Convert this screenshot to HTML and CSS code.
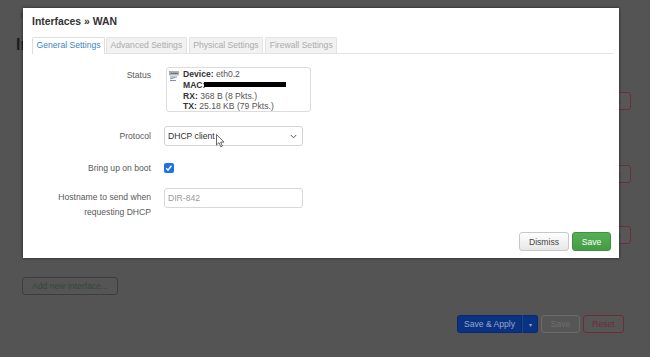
FILE: index.html
```html
<!DOCTYPE html>
<html>
<head>
<meta charset="utf-8">
<title>Interfaces » WAN</title>
<link rel="stylesheet" href="styles.css">
</head>
<body>
<div class="page">
  <div class="topnav"><span class="crumb">Interfaces</span></div>
  <h2 class="page-title">Interfaces</h2>
  <div class="iface-list">
    <div class="iface-row"><button class="btn-del">Delete</button></div>
    <div class="iface-row short"><button class="btn-del">Delete</button></div>
    <div class="iface-row last"><button class="btn-del">Delete</button></div>
  </div>
  <div class="add-wrap"><button class="btn-add">Add new interface...</button></div>
  <div class="actions">
    <div class="split">
      <button class="btn-apply">Save &amp; Apply</button>
      <button class="btn-apply-drop">▾</button>
    </div>
    <button class="btn-save-bg">Save</button>
    <button class="btn-reset">Reset</button>
  </div>
</div>

<div class="modal">
  <h4 class="modal-title">Interfaces » WAN</h4>
  <ul class="tabs">
    <li class="tab active">General Settings</li>
    <li class="tab">Advanced Settings</li>
    <li class="tab">Physical Settings</li>
    <li class="tab">Firewall Settings</li>
  </ul>
  <div class="form">
    <div class="row">
      <div class="label status-label">Status</div>
      <div class="status-box">
        <svg class="status-icon" width="10" height="10" viewBox="0 0 10 10">
          <rect x="0.5" y="0.5" width="9" height="3.5" fill="#c9c9c9" stroke="#8a8a8a" stroke-width="0.6"/>
          <rect x="1.5" y="1.6" width="1.2" height="1.3" fill="#333"/>
          <rect x="3.5" y="1.6" width="1.2" height="1.3" fill="#333"/>
          <rect x="5.5" y="1.6" width="1.2" height="1.3" fill="#333"/>
          <rect x="7.4" y="1.6" width="1.2" height="1.3" fill="#333"/>
          <path d="M1 6 H8 M1 8 L6 6.5 M1 9.5 H7" stroke="#6d7fc9" stroke-width="0.9" fill="none"/>
        </svg>
        <div class="status-lines">
          <div><b>Device:</b> eth0.2</div>
          <div><b>MAC:</b><span class="redact"></span></div>
          <div><b>RX:</b> 368 B (8 Pkts.)</div>
          <div><b>TX:</b> 25.18 KB (79 Pkts.)</div>
        </div>
      </div>
    </div>
    <div class="row proto-row">
      <div class="label line20">Protocol</div>
      <div class="select">
        <span>DHCP client</span>
        <svg width="7" height="5" viewBox="0 0 7 5"><path d="M0.8 1 L3.5 3.8 L6.2 1" stroke="#555" stroke-width="1" fill="none"/></svg>
      </div>
    </div>
    <div class="row boot-row">
      <div class="label line20">Bring up on boot</div>
      <div class="check-wrap">
        <span class="checkbox">
          <svg width="10" height="10" viewBox="0 0 10 10"><path d="M2.3 5.2 L4.2 7.2 L7.8 2.6" stroke="#fff" stroke-width="1.5" fill="none"/></svg>
        </span>
      </div>
    </div>
    <div class="row host-row">
      <div class="label host-label">Hostname to send when<br>requesting DHCP</div>
      <div class="input"><span class="placeholder">DIR-842</span></div>
    </div>
  </div>
  <div class="modal-foot">
    <button class="btn-dismiss">Dismiss</button>
    <button class="btn-save">Save</button>
  </div>
</div>

<svg class="cursor" width="9" height="14" viewBox="0 0 9 14">
  <path d="M0.5 0.5 L0.5 11 L3 8.6 L4.8 12.8 L6.4 12.1 L4.7 8.1 L8 8.1 Z" fill="#fff" stroke="#444" stroke-width="0.8"/>
</svg>
</body>
</html>
```

FILE: styles.css
```css
* { box-sizing: border-box; }

body {
  margin: 0;
  width: 650px;
  height: 357px;
  overflow: hidden;
  position: relative;
  background: #545454;
  font-family: "Liberation Sans", Arial, sans-serif;
  font-size: 8.6px;
}

button {
  font-family: inherit;
  font-size: 8.6px;
  margin: 0;
  padding: 0;
  white-space: nowrap;
}

/* ---------- dimmed page behind the modal ---------- */
.page {
  padding: 0 19px 0 16px;
}

.topnav {
  height: 35px;
  padding: 10px 0 0 4px;
}

.crumb {
  color: #22416c;
  font-size: 8px;
  line-height: 10px;
}

.page-title {
  margin: 0;
  font-size: 16px;
  line-height: 20px;
  color: #1c1c1c;
  font-weight: bold;
}

.iface-list {
  display: flex;
  flex-direction: column;
  padding-top: 37px;
}

.iface-row {
  height: 73px;
  display: flex;
  justify-content: flex-end;
  align-items: flex-start;
}

.iface-row.short { height: 61px; }
.iface-row.last { height: 51px; }

.btn-del {
  width: 46px;
  height: 18px;
  background: #575757;
  border: 1px solid #6c2f38;
  border-radius: 3px;
  color: #6c2f38;
}

.add-wrap {
  padding-left: 6px;
}

.btn-add {
  height: 18px;
  width: 96px;
  background: #555;
  border: 1px solid #3d3d3d;
  border-radius: 3px;
  color: #34483a;
}

.actions {
  margin-top: 20px;
  margin-right: 7px;
  display: flex;
  justify-content: flex-end;
  gap: 3px;
}

.split {
  display: flex;
}

.btn-apply,
.btn-apply-drop {
  height: 18px;
  background: #0a3283;
  border: 1px solid #082a6c;
  color: #9aa6c6;
}

.btn-apply {
  width: 65px;
  border-radius: 3px 0 0 3px;
}

.btn-apply-drop {
  width: 16px;
  border-left-color: #1e468f;
  border-radius: 0 3px 3px 0;
  font-size: 6px;
}

.btn-save-bg {
  width: 39px;
  height: 18px;
  background: #565656;
  border: 1px solid #6a6a6a;
  border-radius: 3px;
  color: #6e6e6e;
}

.btn-reset {
  width: 41px;
  height: 18px;
  background: #565656;
  border: 1px solid #6e2c35;
  border-radius: 3px;
  color: #6e2c35;
}

/* ---------- modal ---------- */
.modal {
  position: absolute;
  left: 23px;
  top: 8px;
  width: 596px;
  height: 250px;
  background: #fff;
  box-shadow: 0 0 3px rgba(0, 0, 0, 0.6);
  display: flex;
  flex-direction: column;
  padding: 7px 6px 7px 9px;
}

.modal-title {
  margin: 0;
  font-size: 10.4px;
  line-height: 14px;
  font-weight: bold;
  color: #333;
}

.tabs {
  list-style: none;
  margin: 8px 0 0 0;
  padding: 0;
  display: flex;
  height: 17px;
  border-bottom: 1px solid #e3e3e3;
}

.tab {
  height: 16px;
  line-height: 15px;
  padding: 0 3.5px;
  border: 1px solid #e3e3e3;
  border-bottom: none;
  border-radius: 2px 2px 0 0;
  background: #f2f2f2;
  color: #ababab;
  margin-right: 2px;
}

.tab.active {
  background: #fff;
  color: #3a86c6;
  height: 17px;
  margin-right: 1px;
  border-color: #dedede;
}

.form {
  margin-top: 13px;
  display: flex;
  flex-direction: column;
}

.row {
  display: grid;
  grid-template-columns: 119px auto;
  column-gap: 13px;
  align-items: start;
}

.label {
  text-align: right;
  color: #5a5a5a;
}

.status-label {
  padding-top: 3px;
  line-height: 11px;
}

.line20 {
  line-height: 20px;
}

.status-box {
  margin-left: 2px;
  width: 145px;
  height: 45px;
  border: 1px solid #dcdcdc;
  border-radius: 3px;
  padding: 1px 3px 1px 2px;
  display: flex;
  gap: 4px;
  color: #555;
}

.status-icon {
  margin-top: 2px;
  flex: none;
}

.status-lines {
  line-height: 10.75px;
}

.status-lines b {
  color: #333;
}

.redact {
  display: inline-block;
  width: 82px;
  height: 5px;
  margin-left: -1px;
  background: #000;
  vertical-align: 1px;
}

.proto-row {
  margin-top: 14px;
}

.select {
  width: 139px;
  height: 20px;
  border: 1px solid #d2d2d2;
  border-radius: 3px;
  padding: 0 5px 0 3px;
  display: flex;
  align-items: center;
  justify-content: space-between;
  color: #333;
}

.boot-row {
  margin-top: 12px;
}

.check-wrap {
  height: 20px;
  display: flex;
  align-items: center;
}

.checkbox {
  width: 9.5px;
  height: 9.5px;
  border-radius: 2px;
  background: #1b73e6;
  display: flex;
  align-items: center;
  justify-content: center;
}

.host-row {
  margin-top: 10px;
}

.host-label {
  padding-top: 2px;
  line-height: 14.5px;
}

.input {
  width: 139px;
  height: 20px;
  border: 1px solid #d8d8d8;
  border-radius: 3px;
  padding: 0 4px 0 3px;
  display: flex;
  align-items: center;
}

.placeholder {
  color: #9a9a9a;
}

.modal-foot {
  margin-top: auto;
  display: flex;
  justify-content: flex-end;
  gap: 3px;
  padding-right: 2px;
}

.btn-dismiss {
  width: 50px;
  height: 19px;
  background: linear-gradient(#ffffff, #e6e6e6);
  border: 1px solid #c8c8c8;
  border-radius: 3px;
  color: #444;
}

.btn-save {
  width: 39px;
  height: 19px;
  background: linear-gradient(#55b055, #449c44);
  border: 1px solid #3f8f3f;
  border-radius: 3px;
  color: #fff;
}

.cursor {
  position: absolute;
  left: 216px;
  top: 134px;
}
```
